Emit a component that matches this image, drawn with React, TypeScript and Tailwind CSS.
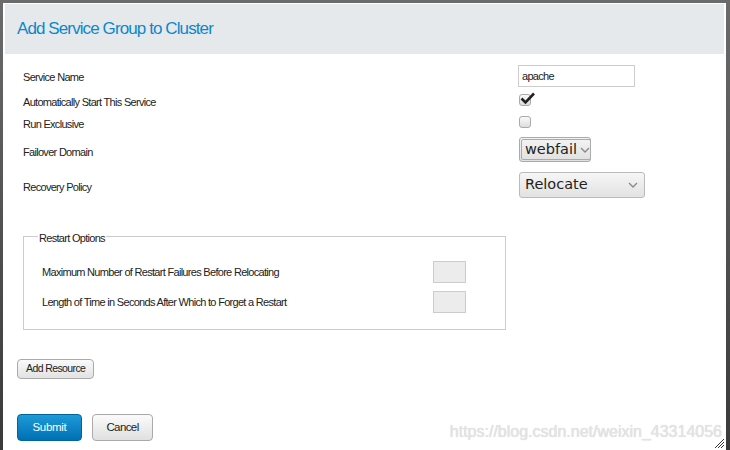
import React from 'react';

const labelFont = { fontFamily: '"Liberation Sans", Arial, sans-serif' };

function Label({ children }: { children: React.ReactNode }) {
    return (
        <span className="text-[11px] tracking-[-0.7px] text-[#222]" style={labelFont}>
            {children}
        </span>
    );
}

function Chevron() {
    return (
        <svg width="10" height="6" viewBox="0 0 10 6" className="shrink-0">
            <path d="M1 1 L5 5 L9 1" fill="none" stroke="#888" strokeWidth="1.3" />
        </svg>
    );
}

export default function App() {
    return (
        <div className="flex h-[450px] w-[730px] bg-gradient-to-b from-[#6b6b6b] to-[#3a3a3a] pt-[3px]">
            <div className="ml-[3px] mr-[4px] flex flex-1 flex-col bg-white">
                {/* header */}
                <div className="mx-[2px] mt-[1px] flex h-[50px] items-center bg-[#e6e9ec] pl-[12px]">
                    <h1
                        className="text-[17px] tracking-[-0.9px] text-[#0d87c9]"
                        style={labelFont}
                    >
                        Add Service Group to Cluster
                    </h1>
                </div>

                {/* form */}
                <div className="relative flex-1">
                    <div className="flex flex-col pl-[20px] pt-[11px]">
                        <div className="flex h-[22px] items-center">
                            <div className="w-[495px] -translate-y-[1px]"><Label>Service Name</Label></div>
                            <div className="flex h-[22px] w-[117px] items-center border border-[#ccc] px-[3px]">
                                <span className="text-[11px] tracking-[-0.7px] text-[#222]" style={labelFont}>apache</span>
                            </div>
                        </div>
                        <div className="mt-[6px] flex h-[14px] items-center">
                            <div className="w-[496px]"><Label>Automatically Start This Service</Label></div>
                            <div className="relative h-[12px] w-[12px] rounded-[3px] border border-[#aaa] bg-gradient-to-b from-[#fafafa] to-[#ddd]">
                                <svg width="16" height="13" viewBox="0 0 16 13" className="absolute -top-[3px] left-[0px]">
                                    <path d="M1.5 6.5 L5.5 10.5 L14 1.5" fill="none" stroke="#222" strokeWidth="2.6" />
                                </svg>
                            </div>
                        </div>
                        <div className="mt-[8px] flex h-[14px] items-center">
                            <div className="w-[496px]"><Label>Run Exclusive</Label></div>
                            <div className="h-[12px] w-[12px] rounded-[3px] border border-[#aaa] bg-gradient-to-b from-[#fafafa] to-[#ddd]" />
                        </div>
                        <div className="mt-[8px] flex h-[25px] items-center">
                            <div className="w-[496px]"><Label>Failover Domain</Label></div>
                            <div className="flex h-[25px] w-[72px] items-center rounded-[3px] border border-[#aaa] bg-gradient-to-b from-[#f4f4f4] to-[#e0e0e0] p-[1px]">
                                <div className="flex h-full flex-1 items-center gap-[3px] rounded-[2px] border border-[#aaa] pl-[3px]">
                                    <span className="text-[14.5px] text-[#222]" style={{ fontFamily: '"DejaVu Sans", sans-serif' }}>webfail</span>
                                    <Chevron />
                                </div>
                            </div>
                        </div>
                        <div className="mt-[10px] flex h-[26px] items-center">
                            <div className="w-[496px]"><Label>Recovery Policy</Label></div>
                            <div className="flex h-[26px] w-[126px] items-center justify-between rounded-[3px] border border-[#bbb] bg-gradient-to-b from-[#f6f6f6] to-[#e2e2e2] pl-[5px] pr-[6px]">
                                <span className="text-[14.5px] text-[#222]" style={{ fontFamily: '"DejaVu Sans", sans-serif' }}>Relocate</span>
                                <Chevron />
                            </div>
                        </div>
                    </div>

                    {/* restart options */}
                    <fieldset className="ml-[20px] mt-[26px] h-[106px] w-[483px] border border-[#ccc] pl-[14px] pr-[39px]">
                        <legend className="px-[1px]">
                            <Label>Restart Options</Label>
                        </legend>
                        <div className="flex flex-col pl-[4px] pt-[13px]">
                            <div className="flex h-[22px] items-center justify-between">
                                <Label>Maximum Number of Restart Failures Before Relocating</Label>
                                <div className="h-[22px] w-[33px] border border-[#ccc] bg-[#ececec]" />
                            </div>
                            <div className="mt-[8px] flex h-[22px] items-center justify-between">
                                <Label>Length of Time in Seconds After Which to Forget a Restart</Label>
                                <div className="h-[22px] w-[33px] border border-[#ccc] bg-[#ececec]" />
                            </div>
                        </div>
                    </fieldset>

                    <div className="ml-[14px] mt-[29px]">
                        <button className="flex h-[20px] items-center rounded-[4px] border border-[#aaa] bg-gradient-to-b from-[#fafafa] to-[#e2e2e2] px-[8px]">
                            <span className="text-[10.5px] tracking-[-0.6px] text-[#222]" style={labelFont}>Add Resource</span>
                        </button>
                    </div>

                    <div className="ml-[14px] mt-[35px] flex gap-[10px]">
                        <button className="flex h-[27px] w-[65px] items-center justify-center rounded-[4px] border border-[#00659c] bg-gradient-to-b from-[#1d9ad9] to-[#0070b3]">
                            <span className="text-[11.5px] tracking-[-0.3px] text-white" style={labelFont}>Submit</span>
                        </button>
                        <button className="flex h-[27px] w-[61px] items-center justify-center rounded-[4px] border border-[#aaa] bg-gradient-to-b from-[#fbfbfb] to-[#e0e0e0]">
                            <span className="text-[11.5px] tracking-[-0.6px] text-[#222]" style={labelFont}>Cancel</span>
                        </button>
                    </div>

                    {/* watermark */}
                    <span
                        className="absolute bottom-[6px] right-[4px] text-[16px] text-[#e4e4e4]"
                        style={{ ...labelFont, textShadow: '0 0 1px #cfcfcf' }}
                    >
                        https://blog.csdn.net/weixin_43314056
                    </span>
                    {/* resize grip */}
                    <svg width="11" height="11" viewBox="0 0 11 11" className="absolute bottom-[1px] right-[1px]">
                        <path d="M1 10 L10 1 M4 10 L10 4 M7 10 L10 7" stroke="#333" strokeWidth="1" />
                    </svg>
                </div>
            </div>
        </div>
    );
}
